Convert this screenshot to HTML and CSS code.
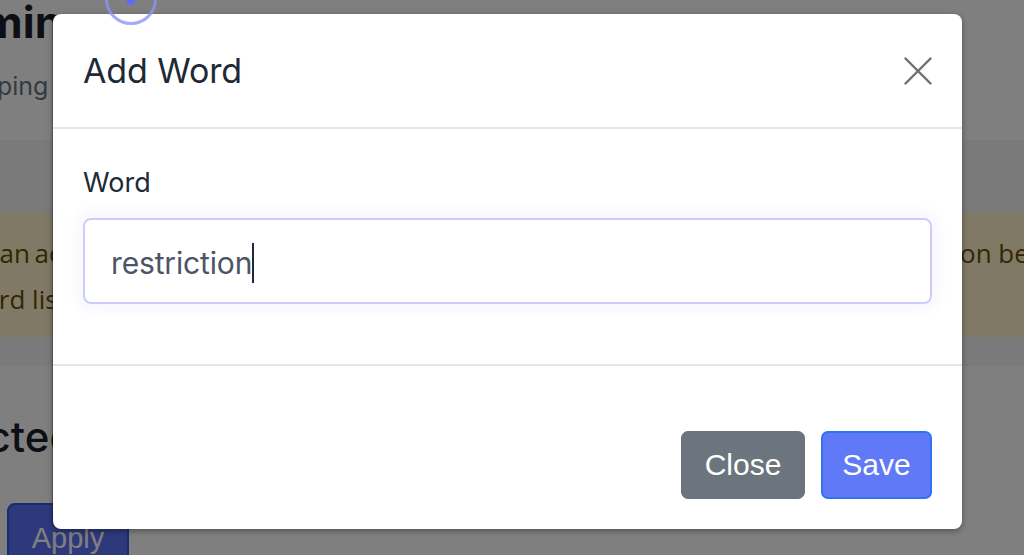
FILE: index.html
```html
<!DOCTYPE html>
<html lang="en">
<head>
<meta charset="utf-8">
<title>Add Word</title>
<link rel="stylesheet" href="styles.css">
</head>
<body>
<div class="page">
  <header class="page-head">
    <h1 class="page-title">Admin</h1>
    <p class="page-sub">Keeping content clean</p>
  </header>
  <section class="notice-band">
    <div class="alert">
      <div class="alert-col">
        <p class="alert-line first">can activate a review of every new post, so each message containing a word on this list needs moderati</p>
        <p class="alert-line second">word list is shared by all boards.</p>
      </div>
      <div class="alert-col">
        <p class="alert-line">on before it is published.</p>
      </div>
    </div>
  </section>
  <section class="restricted">
    <h2 class="restricted-title">Restricted Words</h2>
    <button class="apply-btn" type="button">Apply</button>
  </section>
</div>

<div class="backdrop"></div>

<div class="modal" role="dialog" aria-labelledby="modal-title">
  <div class="modal-header">
    <h5 class="modal-title" id="modal-title">Add Word</h5>
    <button class="btn-close" type="button" aria-label="Close">
      <svg width="28" height="28" viewBox="0 0 28 28" aria-hidden="true">
        <path d="M1.5 1.5 L26.5 26.5 M26.5 1.5 L1.5 26.5" stroke="#6f6f6f" stroke-width="2.4" stroke-linecap="round" fill="none"/>
      </svg>
    </button>
  </div>
  <div class="modal-body">
    <label class="field-label" for="word">Word</label>
    <div class="field" id="word">
      <span class="field-value">restriction</span><span class="caret"></span>
    </div>
  </div>
  <div class="modal-footer">
    <button class="btn btn-secondary" type="button">Close</button>
    <button class="btn btn-primary" type="button">Save</button>
  </div>
</div>

<div class="cursor-ring"><span class="cursor-dot"></span></div>
</body>
</html>
```

FILE: styles.css
```css
html, body {
  margin: 0;
  padding: 0;
}

body {
  width: 1024px;
  height: 555px;
  overflow: hidden;
  font-family: Inter, "Noto Sans", sans-serif;
  background: #ffffff;
  position: relative;
}

/* ---------- background page ---------- */
.page {
  display: flex;
  flex-direction: column;
}

.page-head {
  height: 140px;
  overflow: hidden;
}

.page-title {
  margin: -5px 0 0 -77px;
  font-size: 44px;
  line-height: 54px;
  font-weight: 700;
  color: #1a1f2b;
  white-space: nowrap;
}

.page-sub {
  margin: 20px 0 0 -48px;
  font-size: 25px;
  line-height: 34px;
  color: #6b7280;
  white-space: nowrap;
}

.notice-band {
  background: #f4f4f5;
  padding: 73px 0 29px;
}

.alert {
  background: #fff3cd;
  height: 124px;
  overflow: hidden;
  display: grid;
  grid-template-columns: 960px 1fr;
  font-family: "Open Sans", sans-serif;
  color: #664d03;
  padding-top: 17px;
  box-sizing: border-box;
}

.alert-col {
  overflow: hidden;
}

.alert-line {
  margin: 0;
  font-size: 26px;
  line-height: 46px;
  white-space: nowrap;
}

.alert-line.first {
  text-indent: -13px;
  word-spacing: -2px;
}

.alert-line.second {
  text-indent: -37px;
}

.restricted {
  padding-top: 45px;
  display: flex;
  flex-direction: column;
}

.restricted-title {
  margin: 0 0 0 -129px;
  font-size: 42px;
  line-height: 52px;
  font-weight: 500;
  color: #1a1f2b;
  white-space: nowrap;
}

.apply-btn {
  margin: 40px 0 0 7px;
  width: 122px;
  height: 62px;
  background: #5b72f6;
  border: 2px solid #2a5ae6;
  border-radius: 8px;
  color: #ffffff;
  font-family: "Liberation Sans", Arial, sans-serif;
  font-size: 29px;
  padding: 8px 0 0;
  align-self: flex-start;
}

/* ---------- overlay ---------- */
.backdrop {
  position: absolute;
  inset: 0;
  background: rgba(0, 0, 0, 0.5);
}

.modal {
  position: absolute;
  left: 53px;
  top: 14px;
  width: 909px;
  height: 515px;
  background: #ffffff;
  border-radius: 8px;
  box-shadow: 0 2px 6px rgba(0, 0, 0, 0.35), -1px 0 1px rgba(0, 0, 0, 0.25);
  display: flex;
  flex-direction: column;
}

.modal-header {
  height: 115px;
  box-sizing: border-box;
  padding: 0 28px 0 30px;
  display: flex;
  align-items: center;
  justify-content: space-between;
  border-bottom: 2px solid #e3e6ea;
}

.modal-title {
  margin: 0;
  font-size: 34px;
  font-weight: 400;
  color: #1f2937;
  letter-spacing: -0.1px;
}

.btn-close {
  width: 32px;
  height: 32px;
  padding: 0;
  border: 0;
  background: transparent;
  display: flex;
  align-items: center;
  justify-content: center;
}

.modal-body {
  height: 237px;
  box-sizing: border-box;
  padding: 38px 30px 0;
  border-bottom: 2px solid #e3e6ea;
}

.field-label {
  display: block;
  font-size: 27px;
  line-height: 32px;
  font-weight: 400;
  color: #1f2937;
}

.field {
  margin-top: 19px;
  height: 86px;
  box-sizing: border-box;
  border: 2px solid #cbcdfc;
  border-radius: 8px;
  padding: 4px 26px 0;
  display: flex;
  align-items: center;
  box-shadow: 0 0 12px 6px rgba(120, 120, 240, 0.06);
}

.field-value {
  font-size: 30px;
  color: #4b5567;
  letter-spacing: -0.15px;
}

.caret {
  width: 2px;
  height: 40px;
  background: #1f2937;
  margin-left: 0;
}

.modal-footer {
  flex: 1;
  display: flex;
  justify-content: flex-end;
  align-items: flex-start;
  gap: 16px;
  padding: 65px 30px 0;
}

.btn {
  height: 68px;
  border-radius: 7px;
  font-family: "Liberation Sans", Arial, sans-serif;
  font-size: 30px;
  color: #ffffff;
  padding: 0;
  box-sizing: border-box;
}

.btn-secondary {
  width: 124px;
  background: #6c757d;
  border: 1px solid #6c757d;
}

.btn-primary {
  width: 111px;
  background: #6079f6;
  border: 2px solid #2f72f2;
}

/* pointer highlight drawn over everything */
.cursor-ring {
  position: absolute;
  left: 105px;
  top: -27px;
  width: 52px;
  height: 52px;
  box-sizing: border-box;
  border: 3px solid rgba(140, 148, 250, 0.8);
  border-radius: 50%;
}

.cursor-dot {
  position: absolute;
  left: 19px;
  top: 21px;
  width: 8px;
  height: 8px;
  border-radius: 50%;
  background: #5d6cf8;
}
```
